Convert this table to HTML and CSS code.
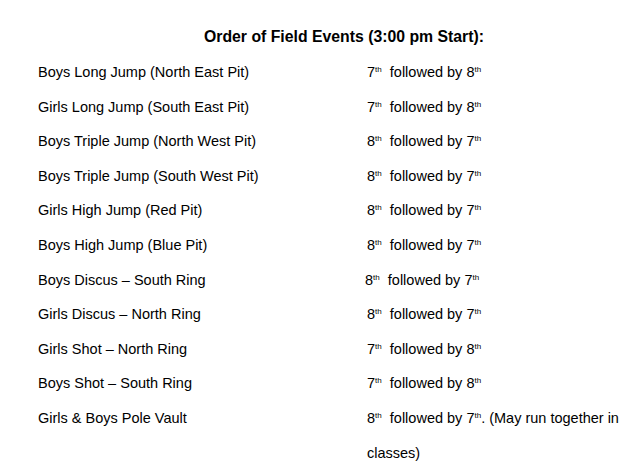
FILE: index.html
```html
<!DOCTYPE html>
<html>
<head>
<meta charset="utf-8">
<link rel="stylesheet" href="styles.css">
</head>
<body>
<div class="page">
  <h1 class="title">Order of Field Events (3:00 pm Start):</h1>
  <div class="list">
    <div class="row"><div class="event">Boys Long Jump (North East Pit)</div><div class="order">7<sup>th</sup>&nbsp; followed by 8<sup>th</sup></div></div>
    <div class="row"><div class="event">Girls Long Jump (South East Pit)</div><div class="order">7<sup>th</sup>&nbsp; followed by 8<sup>th</sup></div></div>
    <div class="row"><div class="event">Boys Triple Jump (North West Pit)</div><div class="order">8<sup>th</sup>&nbsp; followed by 7<sup>th</sup></div></div>
    <div class="row"><div class="event">Boys Triple Jump (South West Pit)</div><div class="order">8<sup>th</sup>&nbsp; followed by 7<sup>th</sup></div></div>
    <div class="row"><div class="event">Girls High Jump (Red Pit)</div><div class="order">8<sup>th</sup>&nbsp; followed by 7<sup>th</sup></div></div>
    <div class="row"><div class="event">Boys High Jump (Blue Pit)</div><div class="order">8<sup>th</sup>&nbsp; followed by 7<sup>th</sup></div></div>
    <div class="row"><div class="event">Boys Discus – South Ring</div><div class="order shift">8<sup>th</sup>&nbsp; followed by 7<sup>th</sup></div></div>
    <div class="row"><div class="event">Girls Discus – North Ring</div><div class="order">8<sup>th</sup>&nbsp; followed by 7<sup>th</sup></div></div>
    <div class="row"><div class="event">Girls Shot – North Ring</div><div class="order">7<sup>th</sup>&nbsp; followed by 8<sup>th</sup></div></div>
    <div class="row"><div class="event">Boys Shot – South Ring</div><div class="order">7<sup>th</sup>&nbsp; followed by 8<sup>th</sup></div></div>
    <div class="row"><div class="event">Girls &amp; Boys Pole Vault</div><div class="order">8<sup>th</sup>&nbsp; followed by 7<sup>th</sup>. (May run together in classes)</div></div>
  </div>
</div>
</body>
</html>
```
FILE: styles.css
```css
html, body {
  margin: 0;
  padding: 0;
  background: #ffffff;
}
body {
  font-family: "Liberation Sans", Arial, sans-serif;
  color: #000000;
  font-size: 14.5px;
}
.page {
  padding: 0 0 0 38px;
}
.title {
  margin: 0;
  padding: 24px 0 0 0;
  font-size: 15.8px;
  font-weight: bold;
  line-height: 26px;
  text-align: center;
  width: 612px;
}
.list {
  margin-top: 5px;
}
.row {
  display: flex;
  line-height: 34.6px;
}
.event {
  width: 329px;
  flex: none;
}
.order {
  width: 255px;
}
.order.shift {
  margin-left: -2px;
}
sup {
  font-size: 8px;
  line-height: 0;
  vertical-align: 5px;
}
```
